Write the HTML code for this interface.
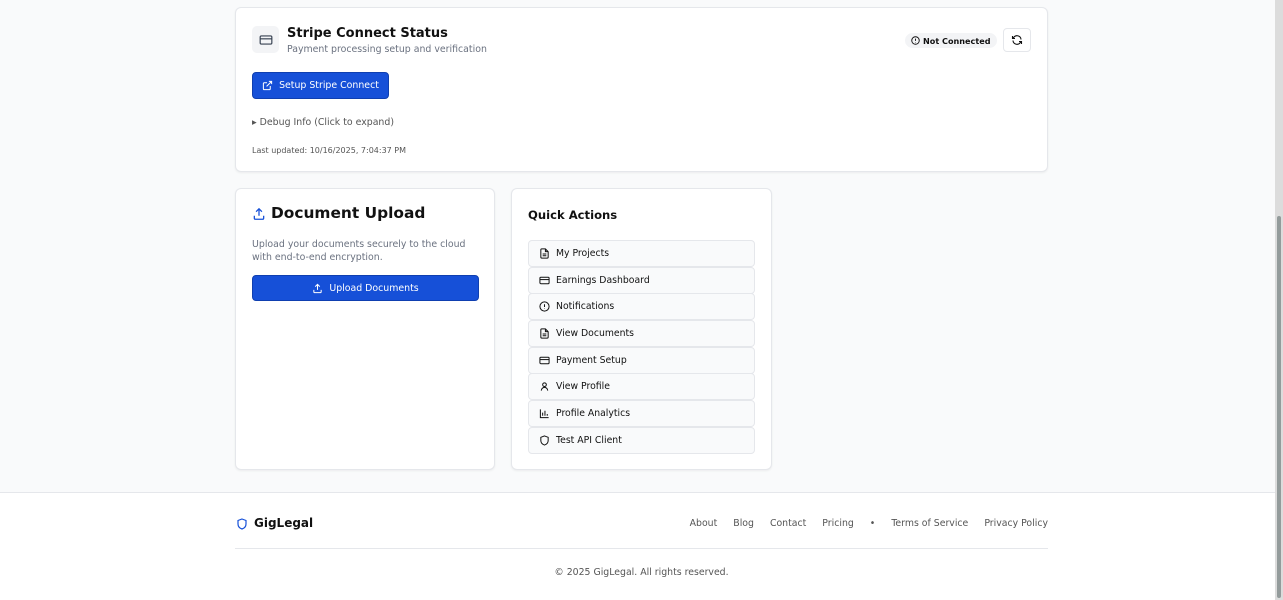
<!DOCTYPE html>
<html><head><meta charset="utf-8"><style>
*{box-sizing:border-box;margin:0;padding:0}
body{width:1283px;height:600px;overflow:hidden;background:#f9fafb;font-family:"DejaVu Sans","Liberation Sans",sans-serif;color:#111;position:relative}
.card{position:absolute;background:#fff;border:1px solid #e5e7eb;border-radius:6px;box-shadow:0 1px 2px rgba(0,0,0,.06)}
.abs{position:absolute}
svg{display:block}
.qa{position:absolute;left:16px;width:227px;height:27px;background:#f9fafb;border:1px solid #e5e7eb;border-radius:4px;font-size:9.3px;color:#111;display:flex;align-items:center;padding-left:10px;gap:6px}
.btn{position:absolute;background:#1650d8;color:#fff;border-radius:4px;font-size:9.4px;display:flex;align-items:center;justify-content:center;gap:6px;border:1px solid #0f3fb0}
.foot a{color:#555;text-decoration:none;font-size:9.35px;margin-left:16px}
</style></head><body>
<div class="card" style="left:235px;top:7px;width:813px;height:165px">
  <div class="abs" style="left:16px;top:18px;width:27px;height:27px;background:#f3f4f6;border-radius:5px;display:flex;align-items:center;justify-content:center">
    <svg width="14" height="14" viewBox="0 0 24 24" fill="none" stroke="#374151" stroke-width="2"><rect x="2" y="5" width="20" height="14" rx="2"/><path d="M2 10h20"/></svg>
  </div>
  <div class="abs" style="left:51px;top:18px;font-size:13px;font-weight:bold">Stripe Connect Status</div>
  <div class="abs" style="left:51px;top:36px;font-size:9.4px;color:#6b7280">Payment processing setup and verification</div>
  <div class="abs" style="left:669px;top:25px;height:15px;padding:0 6px;background:#f3f4f6;border-radius:8px;font-size:8.1px;font-weight:bold;display:flex;align-items:center;gap:3px">
    <svg width="9" height="9" viewBox="0 0 24 24" fill="none" stroke="#111" stroke-width="2.5"><circle cx="12" cy="12" r="10"/><path d="M12 7v6M12 16v1"/></svg>Not Connected</div>
  <div class="abs" style="left:767px;top:20px;width:28px;height:24px;border:1px solid #e5e7eb;border-radius:4px;display:flex;align-items:center;justify-content:center">
    <svg width="12" height="12" viewBox="0 0 24 24" fill="none" stroke="#111" stroke-width="2.2"><path d="M20 11A8 8 0 0 0 5.6 6.6L3 9M3 4v5h5M4 13a8 8 0 0 0 14.4 4.4L21 15M21 20v-5h-5"/></svg></div>
  <div class="btn" style="left:16px;top:64px;width:137px;height:27px">
    <svg width="11" height="11" viewBox="0 0 24 24" fill="none" stroke="#fff" stroke-width="2.2"><path d="M18 13v6a2 2 0 0 1-2 2H5a2 2 0 0 1-2-2V8a2 2 0 0 1 2-2h6M15 3h6v6M10 14L21 3"/></svg>Setup Stripe Connect</div>
  <div class="abs" style="left:16px;top:109px;font-size:9.4px;color:#555">▸ Debug Info (Click to expand)</div>
  <div class="abs" style="left:16px;top:138px;font-size:8px;color:#555">Last updated: 10/16/2025, 7:04:37 PM</div>
</div>

<div class="card" style="left:235px;top:188px;width:260px;height:282px">
  <div class="abs" style="left:16px;top:18px"><svg width="14" height="14" viewBox="0 0 24 24" fill="none" stroke="#1650d8" stroke-width="2.2"><path d="M4 15v4a2 2 0 0 0 2 2h12a2 2 0 0 0 2-2v-4M12 3v12M7 8l5-5 5 5"/></svg></div>
  <div class="abs" style="left:35px;top:15px;font-size:15.4px;font-weight:bold">Document Upload</div>
  <div class="abs" style="left:16px;top:49px;font-size:9.4px;line-height:13px;color:#6b7280;width:235px">Upload your documents securely to the cloud with end-to-end encryption.</div>
  <div class="btn" style="left:16px;top:86px;width:227px;height:26px">
    <svg width="11" height="11" viewBox="0 0 24 24" fill="none" stroke="#fff" stroke-width="2.2"><path d="M4 15v4a2 2 0 0 0 2 2h12a2 2 0 0 0 2-2v-4M12 3v12M7 8l5-5 5 5"/></svg>Upload Documents</div>
</div>

<div class="card" style="left:511px;top:188px;width:261px;height:282px">
  <div class="abs" style="left:16px;top:19px;font-size:11.6px;font-weight:bold">Quick Actions</div>
  <div class="qa" style="top:51px"><svg width="11" height="11" viewBox="0 0 24 24" fill="none" stroke="#111" stroke-width="2.2"><path d="M14 2H6a2 2 0 0 0-2 2v16a2 2 0 0 0 2 2h12a2 2 0 0 0 2-2V8zM14 2v6h6M8 13h8M8 17h8"/></svg>My Projects</div>
  <div class="qa" style="top:78px"><svg width="11" height="11" viewBox="0 0 24 24" fill="none" stroke="#111" stroke-width="2.2"><rect x="2" y="5" width="20" height="14" rx="2"/><path d="M2 10h20"/></svg>Earnings Dashboard</div>
  <div class="qa" style="top:104px"><svg width="11" height="11" viewBox="0 0 24 24" fill="none" stroke="#111" stroke-width="2.2"><circle cx="12" cy="12" r="10"/><path d="M12 7v6M12 16v1"/></svg>Notifications</div>
  <div class="qa" style="top:131px"><svg width="11" height="11" viewBox="0 0 24 24" fill="none" stroke="#111" stroke-width="2.2"><path d="M14 2H6a2 2 0 0 0-2 2v16a2 2 0 0 0 2 2h12a2 2 0 0 0 2-2V8zM14 2v6h6M8 13h8M8 17h8"/></svg>View Documents</div>
  <div class="qa" style="top:158px"><svg width="11" height="11" viewBox="0 0 24 24" fill="none" stroke="#111" stroke-width="2.2"><rect x="2" y="5" width="20" height="14" rx="2"/><path d="M2 10h20"/></svg>Payment Setup</div>
  <div class="qa" style="top:184px"><svg width="11" height="11" viewBox="0 0 24 24" fill="none" stroke="#111" stroke-width="2.2"><circle cx="12" cy="8" r="4"/><path d="M5 21a7 7 0 0 1 14 0"/></svg>View Profile</div>
  <div class="qa" style="top:211px"><svg width="11" height="11" viewBox="0 0 24 24" fill="none" stroke="#111" stroke-width="2.2"><path d="M3 3v18h18M8 17V10M13 17V6M18 17v-4"/></svg>Profile Analytics</div>
  <div class="qa" style="top:238px"><svg width="11" height="11" viewBox="0 0 24 24" fill="none" stroke="#111" stroke-width="2.2"><path d="M12 2l8 3v7c0 5-3.5 8.5-8 10-4.5-1.5-8-5-8-10V5z"/></svg>Test API Client</div>
</div>

<div class="abs foot" style="left:0;top:492px;width:1275px;height:108px;background:#fff;border-top:1px solid #e5e7eb">
  <div class="abs" style="left:236px;top:24px"><svg width="12" height="14" viewBox="0 0 24 24" fill="none" stroke="#1650d8" stroke-width="2.4"><path d="M12 2l8 3v7c0 5-3.5 8.5-8 10-4.5-1.5-8-5-8-10V5z"/></svg></div>
  <div class="abs" style="left:254px;top:23px;font-size:12px;font-weight:bold">GigLegal</div>
  <div class="abs" style="right:227px;top:25px;display:flex;align-items:center"><a>About</a><a>Blog</a><a>Contact</a><a>Pricing</a><a>•</a><a>Terms of Service</a><a>Privacy Policy</a></div>
  <div class="abs" style="left:235px;top:55px;width:813px;height:1px;background:#e5e7eb"></div>
  <div class="abs" style="left:0;width:1283px;top:74px;text-align:center;font-size:9.35px;color:#555">© 2025 GigLegal. All rights reserved.</div>
</div>
<div class="abs" style="left:1275px;top:0;width:8px;height:600px;background:#dcdcdc"></div>
<div class="abs" style="left:1277px;top:216px;width:4px;height:382px;background:#939b9b;border-radius:2px"></div>
</body></html>
